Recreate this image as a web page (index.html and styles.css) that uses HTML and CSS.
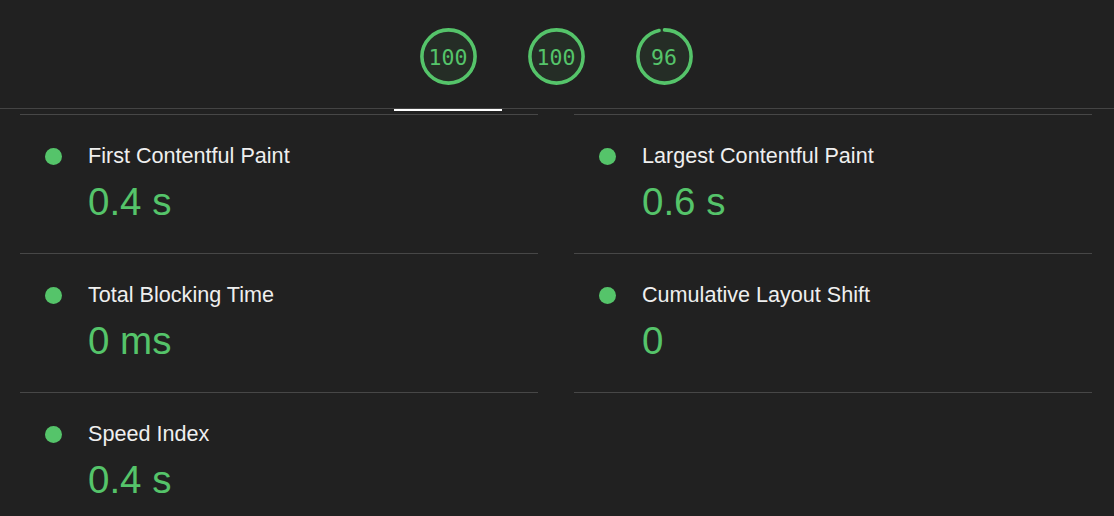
FILE: index.html
```html
<!DOCTYPE html>
<html lang="en">
<head>
<meta charset="utf-8">
<title>Lighthouse metrics</title>
<link rel="stylesheet" href="styles.css">
</head>
<body>
<header class="scores">
  <div class="tab tab-active">
    <div class="gauge">
      <svg viewBox="0 0 120 120" class="gauge-svg">
        <circle class="gauge-base" cx="60" cy="60" r="56"></circle>
        <circle class="gauge-arc" cx="60" cy="60" r="56" stroke-dasharray="351.86 351.86"></circle>
      </svg>
      <span class="gauge-num">100</span>
    </div>
  </div>
  <div class="tab">
    <div class="gauge">
      <svg viewBox="0 0 120 120" class="gauge-svg">
        <circle class="gauge-base" cx="60" cy="60" r="56"></circle>
        <circle class="gauge-arc" cx="60" cy="60" r="56" stroke-dasharray="351.86 351.86"></circle>
      </svg>
      <span class="gauge-num">100</span>
    </div>
  </div>
  <div class="tab">
    <div class="gauge">
      <svg viewBox="0 0 120 120" class="gauge-svg">
        <circle class="gauge-base" cx="60" cy="60" r="56"></circle>
        <circle class="gauge-arc" cx="60" cy="60" r="56" stroke-dasharray="337.79 351.86"></circle>
      </svg>
      <span class="gauge-num">96</span>
    </div>
  </div>
</header>
<main class="metrics">
  <div class="metric">
    <span class="dot"></span>
    <div class="metric-body">
      <div class="metric-title">First Contentful Paint</div>
      <div class="metric-value">0.4 s</div>
    </div>
  </div>
  <div class="metric">
    <span class="dot"></span>
    <div class="metric-body">
      <div class="metric-title">Largest Contentful Paint</div>
      <div class="metric-value">0.6 s</div>
    </div>
  </div>
  <div class="metric">
    <span class="dot"></span>
    <div class="metric-body">
      <div class="metric-title">Total Blocking Time</div>
      <div class="metric-value">0 ms</div>
    </div>
  </div>
  <div class="metric">
    <span class="dot"></span>
    <div class="metric-body">
      <div class="metric-title">Cumulative Layout Shift</div>
      <div class="metric-value">0</div>
    </div>
  </div>
  <div class="metric">
    <span class="dot"></span>
    <div class="metric-body">
      <div class="metric-title">Speed Index</div>
      <div class="metric-value">0.4 s</div>
    </div>
  </div>
</main>
</body>
</html>
```
FILE: styles.css
```css
html, body {
  margin: 0;
  padding: 0;
  background: #212121;
  height: 100%;
  overflow: hidden;
}

body {
  font-family: "Liberation Sans", Arial, sans-serif;
  color: #eeeeee;
}

.scores {
  display: flex;
  justify-content: center;
  height: 108px;
  border-bottom: 1px solid #444444;
  padding-right: 2px;
}

.tab {
  position: relative;
  width: 108px;
  display: flex;
  justify-content: center;
  padding-top: 28px;
  box-sizing: border-box;
}

.tab-active::after {
  content: "";
  position: absolute;
  left: 0;
  right: 0;
  bottom: -3px;
  height: 2px;
  background: #ffffff;
}

.gauge {
  position: relative;
  width: 57px;
  height: 57px;
}

.gauge-svg {
  width: 57px;
  height: 57px;
  display: block;
  transform: rotate(-90deg);
}

.gauge-base {
  fill: rgba(85, 196, 106, 0.08);
  stroke: rgba(85, 196, 106, 0.06);
  stroke-width: 7.5;
}

.gauge-arc {
  fill: none;
  stroke: #55c46a;
  stroke-width: 7.5;
  stroke-linecap: round;
}

.gauge-num {
  position: absolute;
  inset: 0;
  display: flex;
  align-items: center;
  justify-content: center;
  font-family: "DejaVu Sans Mono", "Liberation Mono", monospace;
  font-size: 21.5px;
  color: #55c46a;
  padding-top: 1px;
}

.metrics {
  display: grid;
  grid-template-columns: 518px 518px;
  column-gap: 36px;
  padding: 5px 22px 0 20px;
}

.metric {
  display: flex;
  align-items: flex-start;
  border-top: 1px solid #474747;
  border-bottom: 1px solid #474747;
  margin-bottom: -1px;
  padding: 28px 0 28px 25px;
}

.dot {
  flex: none;
  width: 17px;
  height: 17px;
  border-radius: 50%;
  background: #55c46a;
  margin-top: 5px;
  margin-right: 26px;
}

.metric-title {
  font-size: 21.6px;
  line-height: 26px;
  color: #efefef;
}

.metric-value {
  font-size: 38.5px;
  line-height: 46px;
  margin-top: 10px;
  color: #55c46a;
}
```
